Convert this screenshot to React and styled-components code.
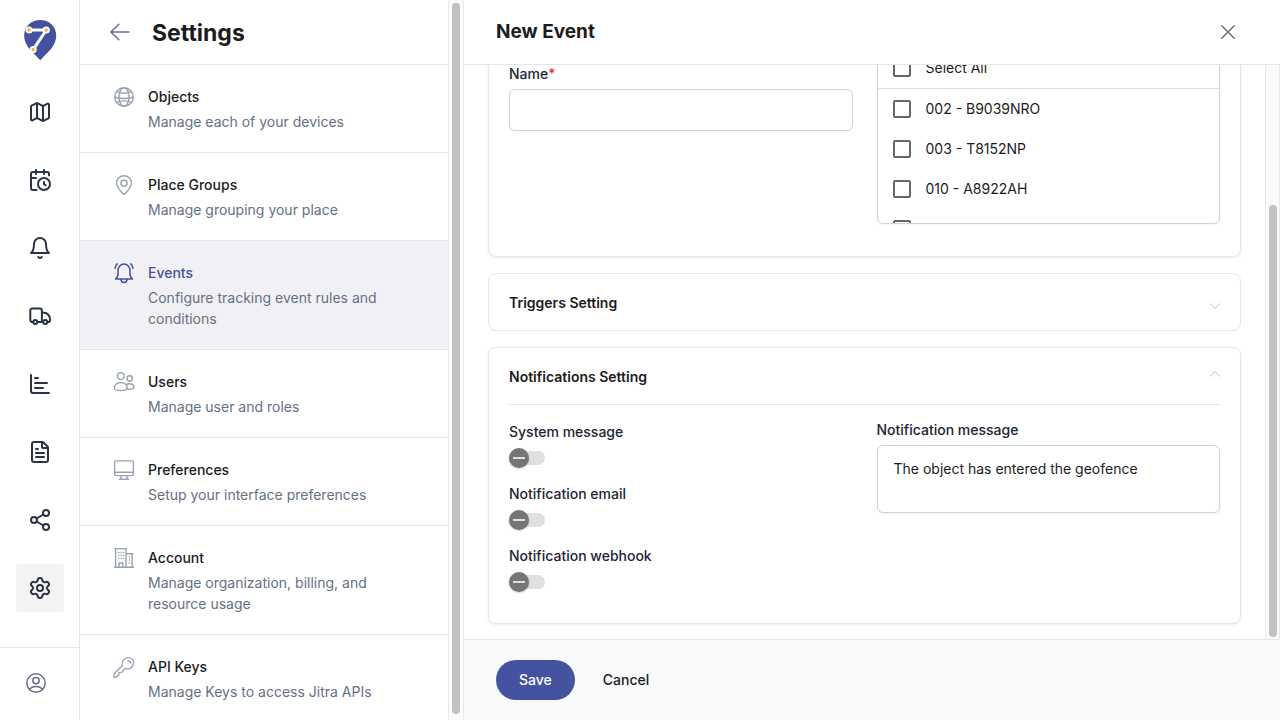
import React from "react";
import styled, { createGlobalStyle, css } from "styled-components";
import {
  Map as MapIcon,
  CalendarClock,
  ChartBar,
  FileText,
  Share2,
  Settings,
} from "lucide-react";

const color = {
  brand: "#4552a0",
  text: "#1c1c1e",
  label: "#1d2433",
  muted: "#667085",
  icon: "#98a2b3",
  rail: "#2b3444",
  line: "#e4e5e9",
  field: "#cfd2de",
};

const GlobalStyle = createGlobalStyle`
  *, *::before, *::after { box-sizing: border-box; }
  body {
    margin: 0;
    background: #fff;
    color: ${color.text};
    font: 400 14px/20px Inter, "Liberation Sans", sans-serif;
  }
  button, input, textarea { font: inherit; color: inherit; }
  h1, h2, h3, p, ul { margin: 0; padding: 0; }
  ul { list-style: none; }
  a { color: inherit; text-decoration: none; }
  svg { display: block; flex: none; }
`;

/* ---------- page frame ---------- */

const Page = styled.div`
  display: flex;
  height: 100vh;
  overflow: hidden;
`;

const Rail = styled.nav`
  display: flex;
  flex-direction: column;
  flex: 0 0 80px;
  border-right: 1px solid ${color.line};
`;

const RailTop = styled.div`
  flex: 1;
  min-height: 0;
  padding: 20px 15px 0 16px;
`;

const LogoLink = styled.a`
  display: flex;
  justify-content: center;
  margin-bottom: 27px;
`;

const RailList = styled.ul`
  display: flex;
  flex-direction: column;
  gap: 20px;
`;

const RailLink = styled.a`
  display: flex;
  align-items: center;
  justify-content: center;
  height: 48px;
  border-radius: 4px;
  color: ${color.rail};
  background: ${(p) => (p.$active ? "#f3f3f4" : "transparent")};
`;

const RailFooter = styled.div`
  display: flex;
  align-items: center;
  height: 73px;
  padding: 0 24px 2px;
  border-top: 1px solid ${color.line};
  color: ${color.muted};
`;

const Side = styled.aside`
  display: flex;
  flex: 0 0 384px;
`;

const SideContent = styled.div`
  flex: 1;
  min-width: 0;
  overflow-y: auto;
  scrollbar-width: none;
`;

const SideHeader = styled.header`
  display: flex;
  align-items: center;
  gap: 20px;
  height: 65px;
  padding: 0 28px;
  border-bottom: 1px solid ${color.line};
`;

const PageTitle = styled.h1`
  padding-top: 2px;
  font-size: 23px;
  line-height: 32px;
  font-weight: 700;
`;

const IconButton = styled.button`
  display: flex;
  padding: 0;
  border: 0;
  background: none;
  color: ${color.muted};
  cursor: pointer;
`;

const MenuLink = styled.a`
  display: flex;
  gap: 12px;
  padding: 20px 56px 20px 32px;
  border-bottom: 1px solid ${color.line};
  color: ${color.icon};
  ${(p) =>
    p.$active &&
    css`
      color: ${color.brand};
      background: #f1f0f5;
    `}
`;

const MenuTitle = styled.h2`
  margin-bottom: 2px;
  font-size: 14px;
  line-height: 24px;
  font-weight: 500;
  color: ${(p) => (p.$active ? color.brand : color.text)};
`;

const MenuText = styled.p`
  line-height: 21px;
  color: ${color.muted};
`;

const Track = styled.div`
  display: flex;
  flex-direction: column;
  justify-content: ${(p) => (p.$end ? "flex-end" : "flex-start")};
  flex: none;
  padding: ${(p) => (p.$end ? "3px 2px 2px 3px" : "3px 3px 6px")};
  border: solid #e8e8e8;
  border-width: 0 1px;
  background: #fafafa;
`;

const Thumb = styled.div`
  width: 8px;
  height: ${(p) => p.$length};
  border-radius: 4px;
  background: #c1c1c1;
`;

/* ---------- event form ---------- */

const Form = styled.form`
  display: flex;
  flex-direction: column;
  flex: 1;
  min-width: 0;
`;

const FormHeader = styled.header`
  display: flex;
  align-items: center;
  justify-content: space-between;
  flex: none;
  height: 65px;
  padding: 0 40px 0 32px;
  border-bottom: 1px solid ${color.line};
`;

const FormTitle = styled.h2`
  font-size: 19px;
  line-height: 28px;
  font-weight: 700;
`;

const FormBody = styled.div`
  display: flex;
  flex: 1;
  min-height: 0;
`;

/* column-reverse keeps the scroll position at the end of the form */
const FormScroll = styled.div`
  display: flex;
  flex-direction: column-reverse;
  flex: 1;
  min-width: 0;
  overflow-y: auto;
  scrollbar-width: none;
`;

const Cards = styled.div`
  display: flex;
  flex-direction: column;
  gap: 16px;
  padding: 16px 24px 15px;
`;

const Card = styled.section`
  padding: 0 20px;
  border: 1px solid #e5e6e8;
  border-radius: 8px;
  ${(p) =>
    p.$open &&
    css`
      padding-bottom: ${p.$open}px;
      box-shadow: 0 1px 3px rgba(0, 0, 0, 0.08);
    `}
`;

const CardToggle = styled.button`
  display: flex;
  align-items: center;
  justify-content: space-between;
  width: 100%;
  height: 56px;
  padding: 2px 0 0;
  border: 0;
  background: none;
  font-weight: 600;
  cursor: pointer;
  svg {
    overflow: visible;
    color: #dcdde0;
    transform: ${(p) => (p["aria-expanded"] ? "rotate(180deg)" : "none")};
  }
`;

const Columns = styled.div`
  display: grid;
  grid-template-columns: 1fr 1fr;
  gap: 24px;
  border-top: 1px solid ${(p) => (p.$ruled ? color.line : "transparent")};
`;

const Column = styled.div`
  display: flex;
  flex-direction: column;
  gap: 16px;
  padding-top: ${(p) => p.$top || 0}px;
`;

const Field = styled.div`
  display: flex;
  flex-direction: column;
  align-items: ${(p) => (p.$start ? "flex-start" : "stretch")};
  gap: ${(p) => (p.$start ? 6 : 5)}px;
`;

const Label = styled.label`
  font-weight: 500;
  color: ${color.label};
`;

const Required = styled.span`
  color: #e5383b;
`;

const fieldBox = css`
  width: 100%;
  border: 1px solid ${color.field};
  border-radius: 6px;
  background: #fff;
  box-shadow: 0 1px 2px rgba(16, 24, 40, 0.05);
`;

const TextInput = styled.input`
  ${fieldBox}
  height: 42px;
  padding: 0 16px;
`;

const TextArea = styled.textarea`
  ${fieldBox}
  display: block;
  height: 68px;
  padding: 13px 16px;
  resize: none;
`;

const Picker = styled.div`
  ${fieldBox}
  overflow: hidden;
`;

const PickerList = styled.ul`
  height: 135px;
  border-top: 1px solid #dfe0e6;
  overflow-y: auto;
  scrollbar-width: none;
`;

const CheckRow = styled.label`
  display: flex;
  align-items: center;
  gap: 15px;
  height: 40px;
  padding: 0 15px;
`;

const CheckBox = styled.input.attrs({ type: "checkbox" })`
  appearance: none;
  width: 18px;
  height: 18px;
  margin: 0;
  border: 2px solid #666;
  border-radius: 2px;
`;

const Switch = styled.input.attrs({ type: "checkbox", role: "switch" })`
  appearance: none;
  display: grid;
  align-items: center;
  width: 36px;
  height: 20px;
  margin: 0;
  cursor: pointer;
  &::before {
    content: "";
    grid-area: 1 / 1;
    height: 14px;
    border-radius: 7px;
    background: #e0e0e0;
  }
  &::after {
    content: "";
    grid-area: 1 / 1;
    width: 20px;
    height: 20px;
    border-radius: 50%;
    background: linear-gradient(#e0e0e0, #e0e0e0) center / 12px 2px no-repeat #757575;
    box-shadow: 0 1px 2px rgba(0, 0, 0, 0.2);
  }
`;

const FormFooter = styled.footer`
  display: flex;
  align-items: center;
  gap: 16px;
  flex: none;
  padding: 20px 32px;
  border-top: 1px solid #e2e5ea;
  background: #f8fafc;
`;

const Button = styled.button`
  height: 40px;
  padding: 0 ${(p) => (p.$primary ? 23 : 12)}px;
  border: 0;
  border-radius: 20px;
  background: ${(p) => (p.$primary ? color.brand : "transparent")};
  color: ${(p) => (p.$primary ? "#fff" : color.text)};
  font-weight: 500;
  cursor: pointer;
`;

/* ---------- icons ---------- */

function Icon({ width = 1.4, children }) {
  return (
    <svg
      width="24"
      height="24"
      viewBox="0 0 24 24"
      fill="none"
      stroke="currentColor"
      strokeWidth={width}
      strokeLinecap="round"
      strokeLinejoin="round"
      aria-hidden="true"
    >
      {children}
    </svg>
  );
}

const Logo = () => (
  <svg width="33" height="41" viewBox="0 0 33 41" aria-hidden="true">
    <path
      d="M16.2 0C25.4 0 32.2 6.6 32.2 15.4c0 6.6-3.4 11.6-7.6 16.2-2.8 3-5.6 5.6-8.4 8.6-2.8-3-5.6-5.6-8.4-8.6C3.6 27 .2 22 .2 15.4.2 6.6 7 0 16.2 0z"
      fill={color.brand}
    />
    <path
      d="M5.4 10H22.2L9.2 29.6"
      fill="none"
      stroke="#fff"
      strokeWidth="3"
      strokeLinejoin="round"
    />
    <g fill="#f0b840" stroke="#fff" strokeWidth="1.8">
      <circle cx="5" cy="10" r="2.7" />
      <circle cx="22.2" cy="10" r="2.7" />
      <circle cx="9.1" cy="29.6" r="2.7" />
    </g>
  </svg>
);

const BellIcon = () => (
  <Icon width={2}>
    <path d="M6 8a6 6 0 0 1 12 0c0 7 3 9 3 9H3s3-2 3-9" />
    <path d="M10.3 21a1.94 1.94 0 0 0 3.4 0" />
  </Icon>
);

const TruckIcon = () => (
  <Icon width={2}>
    <path d="M5 18h-.8a1.9 1.9 0 0 1-1.9-1.9V6.4a2 2 0 0 1 2-2h7.6a2 2 0 0 1 2 2V18H9.6" />
    <path d="M13.9 8.8h2.4c3 0 5.7 3.2 5.7 6.2v1.2a1.8 1.8 0 0 1-1.8 1.8h-.8" />
    <circle cx="7.3" cy="18" r="2" />
    <circle cx="17.2" cy="18" r="2" />
  </Icon>
);

const AccountIcon = () => (
  <Icon width={1.5}>
    <circle cx="12" cy="12" r="9.2" />
    <circle cx="12" cy="9.6" r="3.2" />
    <path d="M5.6 18.4c1.2-2.1 3.6-3 6.4-3s5.2.9 6.4 3" />
  </Icon>
);

const GlobeIcon = () => (
  <Icon>
    <circle cx="12" cy="12" r="9.3" />
    <ellipse cx="12" cy="12" rx="5" ry="9.3" />
    <path d="M4.6 6.6c4.4 2 10.4 2 14.8 0M2.8 12.3c5.6 1.5 12.8 1.5 18.4 0M4.6 17.4c4.4-1.8 10.4-1.8 14.8 0" />
  </Icon>
);

const PinIcon = () => (
  <Icon>
    <path d="M12 21.6c-1.4-1.3-7.5-6.8-7.5-11.8C4.5 5.6 7.9 2.8 12 2.8s7.5 2.8 7.5 7c0 5-6.1 10.5-7.5 11.8z" />
    <circle cx="12" cy="10.3" r="3.1" />
  </Icon>
);

const RingingIcon = () => (
  <Icon width={1.5}>
    <path d="M3.6 18c1.7-1.2 2.4-2.8 2.4-5.4V9.4C6 5.9 8.5 3.1 12 3.1s6 2.8 6 6.3v3.2c0 2.6.7 4.2 2.4 5.4z" />
    <path d="M9 18.2c0 1.9 1.3 3.2 3 3.2s3-1.3 3-3.2M5.2 2.9C4 4 3.2 5.5 3 7.3M18.8 2.9C20 4 20.8 5.5 21 7.3" />
  </Icon>
);

const UsersIcon = () => (
  <Icon>
    <circle cx="8.8" cy="6" r="3.4" />
    <circle cx="17.7" cy="8.5" r="2.7" />
    <path d="M2.3 18.2c0-3.4 2.9-5.7 6.5-5.7s6.3 2.3 6.3 5.7c0 1.3-2.8 2.3-6.3 2.3s-6.5-1-6.5-2.3z" />
    <path d="M14 14.9c.9-.7 2.2-1.100 3.600-1.100 2.500 0 4.300 1.500 4.300 3.500 0 1.300-1.900 1.900-4.300 1.900-.9 0-1.700-.1-2.500-.3" />
  </Icon>
);

const MonitorIcon = () => (
  <Icon width={1.4}>
    <rect x="2.6" y="2.9" width="18.8" height="14.7" rx="1.6" />
    <path d="M2.6 14.3h18.8M9.2 17.6l-.5 3.6M14.8 17.6l.5 3.6M7.2 21.3h9.6" />
  </Icon>
);

const BuildingIcon = () => (
  <Icon width={1.4}>
    <path d="M3.6 21V2.7M14 2.7V21M2.9 2.6h11.8M14 7.7h6.8M20.2 7.7V21M2.4 21.3h19.2M7 21v-4h3.7v4" />
    <path
      d="M6.5 6.5h5.2M6.5 9.5h5.2M6.5 12.5h5.2M17.3 11h.2M17.3 14h.2M17.3 17h.2"
      strokeDasharray="0.2 2.3"
    />
  </Icon>
);

const KeyIcon = () => (
  <Icon>
    <path d="M10.4 10.4C9.4 6.2 12.4 2.6 16.300 2.600c3.100 0 5.300 2.300 5.300 5.200 0 4.200-4 7.200-8.300 5.600l-3.300 3.500c-.4.4-.8.6-1.300.6H7.500c-.4 0-.7.3-.7.7v1.300c0 .4-.2.8-.5 1l-1.500 1.300c-.3.300-.7.400-1.100.400H2.700c-.5 0-.8-.3-.8-.8v-1.700c0-.4.200-.8.500-1.100z" />
    <path d="M16 5.600c1.500 0 2.500.9 2.600 2.500" />
  </Icon>
);

const BackIcon = () => (
  <Icon width={1.5}>
    <path d="M20.8 12H2.8M10.9 4.3L2.8 12l8.1 7.7" />
  </Icon>
);

const CloseIcon = () => (
  <Icon width={1.5}>
    <path d="M5.800 5.800l12.400 12.400M18.200 5.800L5.800 18.200" />
  </Icon>
);

const Chevron = () => (
  <svg
    width="10"
    height="14"
    viewBox="0 0 10 14"
    fill="none"
    stroke="currentColor"
    strokeWidth="1.5"
    aria-hidden="true"
  >
    <path d="M0 7.500l5 5 5-5" />
  </svg>
);

/* ---------- data ---------- */

const railItems = [
  ["Map", <MapIcon size={24} />],
  ["History", <CalendarClock size={24} />],
  ["Alerts", <BellIcon />],
  ["Fleet", <TruckIcon />],
  ["Statistics", <ChartBar size={24} />],
  ["Reports", <FileText size={24} />],
  ["Sharing", <Share2 size={24} />],
  ["Settings", <Settings size={24} />],
];

const menu = [
  ["Objects", "Manage each of your devices", <GlobeIcon />],
  ["Place Groups", "Manage grouping your place", <PinIcon />],
  ["Events", "Configure tracking event rules and conditions", <RingingIcon />],
  ["Users", "Manage user and roles", <UsersIcon />],
  ["Preferences", "Setup your interface preferences", <MonitorIcon />],
  ["Account", "Manage organization, billing, and resource usage", <BuildingIcon />],
  ["API Keys", "Manage Keys to access Jitra APIs", <KeyIcon />],
];

const vehicles = ["002 - B9039NRO", "003 - T8152NP", "010 - A8922AH", ""];

const channels = [
  ["system", "System message"],
  ["email", "Notification email"],
  ["webhook", "Notification webhook"],
];

export default function App() {
  return (
    <>
      <GlobalStyle />
      <Page>
        <Rail aria-label="Main">
          <RailTop>
            <LogoLink href="#" aria-label="Home">
              <Logo />
            </LogoLink>
            <RailList>
              {railItems.map(([name, icon]) => (
                <li key={name}>
                  <RailLink href="#" aria-label={name} $active={name === "Settings"}>
                    {icon}
                  </RailLink>
                </li>
              ))}
            </RailList>
          </RailTop>
          <RailFooter>
            <IconButton type="button" aria-label="Profile">
              <AccountIcon />
            </IconButton>
          </RailFooter>
        </Rail>

        <Side>
          <SideContent>
            <SideHeader>
              <IconButton type="button" aria-label="Back">
                <BackIcon />
              </IconButton>
              <PageTitle>Settings</PageTitle>
            </SideHeader>
            <ul>
              {menu.map(([title, text, icon]) => (
                <li key={title}>
                  <MenuLink href="#" $active={title === "Events"}>
                    {icon}
                    <div>
                      <MenuTitle $active={title === "Events"}>{title}</MenuTitle>
                      <MenuText>{text}</MenuText>
                    </div>
                  </MenuLink>
                </li>
              ))}
            </ul>
          </SideContent>
          <Track>
            <Thumb $length="100%" />
          </Track>
        </Side>

        <Form onSubmit={(e) => e.preventDefault()}>
          <FormHeader>
            <FormTitle>New Event</FormTitle>
            <IconButton type="button" aria-label="Close">
              <CloseIcon />
            </IconButton>
          </FormHeader>

          <FormBody>
            <FormScroll>
              <Cards>
                <Card $open={32}>
                  <Columns>
                    <Column $top={17}>
                      <Field>
                        <Label htmlFor="name">
                          Name<Required>*</Required>
                        </Label>
                        <TextInput id="name" type="text" />
                      </Field>
                    </Column>
                    <Column>
                      <Picker>
                        <CheckRow>
                          <CheckBox />
                          Select All
                        </CheckRow>
                        <PickerList>
                          {vehicles.map((v) => (
                            <li key={v}>
                              <CheckRow>
                                <CheckBox />
                                {v}
                              </CheckRow>
                            </li>
                          ))}
                        </PickerList>
                      </Picker>
                    </Column>
                  </Columns>
                </Card>

                <Card>
                  <CardToggle type="button" aria-expanded={false}>
                    Triggers Setting
                    <Chevron />
                  </CardToggle>
                </Card>

                <Card $open={31}>
                  <CardToggle type="button" aria-expanded={true}>
                    Notifications Setting
                    <Chevron />
                  </CardToggle>
                  <Columns $ruled>
                    <Column $top={17}>
                      {channels.map(([id, name]) => (
                        <Field key={id} $start>
                          <Label htmlFor={id}>{name}</Label>
                          <Switch id={id} />
                        </Field>
                      ))}
                    </Column>
                    <Column $top={15}>
                      <Field>
                        <Label htmlFor="message">Notification message</Label>
                        <TextArea
                          id="message"
                          defaultValue="The object has entered the geofence"
                        />
                      </Field>
                    </Column>
                  </Columns>
                </Card>
              </Cards>
            </FormScroll>
            <Track $end>
              <Thumb $length="76%" />
            </Track>
          </FormBody>

          <FormFooter>
            <Button type="submit" $primary>
              Save
            </Button>
            <Button type="button">Cancel</Button>
          </FormFooter>
        </Form>
      </Page>
    </>
  );
}
